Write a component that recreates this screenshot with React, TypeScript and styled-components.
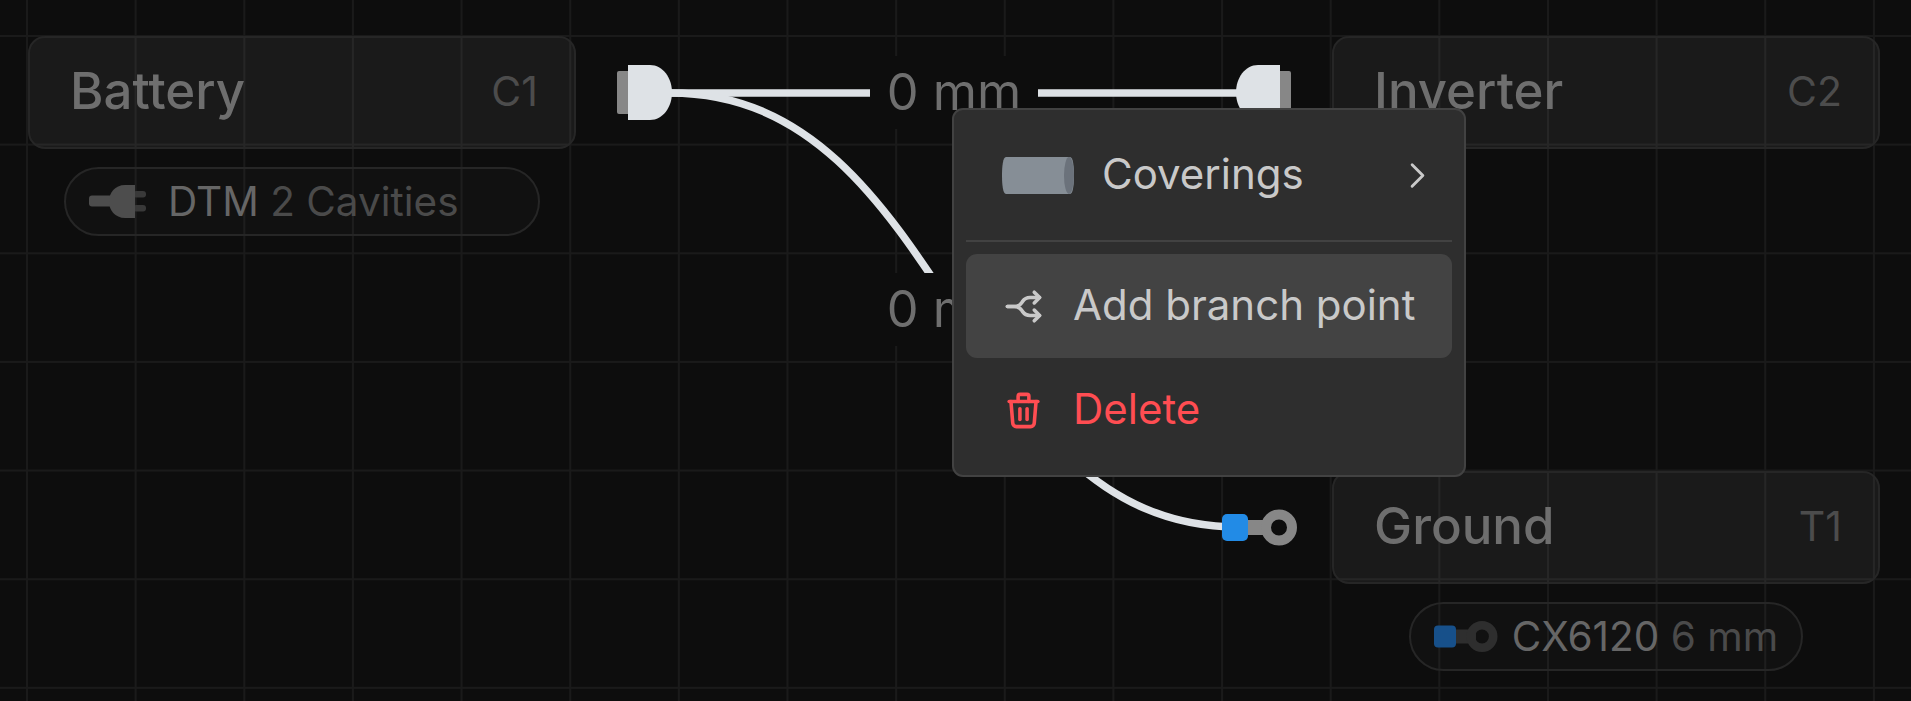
import styled, { createGlobalStyle } from "styled-components";
import { TbArrowsSplit2, TbChevronRight, TbTrash } from "react-icons/tb";

const GlobalStyle = createGlobalStyle`
  html, body {
    margin: 0;
    padding: 0;
    background: #0d0d0d;
    font-family: "Inter", "Liberation Sans", sans-serif;
  }
`;

const Canvas = styled.div`
  position: relative;
  width: 1911px;
  height: 701px;
  overflow: hidden;
  background-color: #0d0d0d;
  background-image:
    linear-gradient(to right, #1a1a1a 2px, transparent 2px),
    linear-gradient(to bottom, #1a1a1a 2px, transparent 2px);
  background-size: 108.65px 108.65px;
  background-position: 26px 35px;
`;

const Wires = styled.svg`
  position: absolute;
  inset: 0;
`;

const NodeGroup = styled.div<{ $x: number; $y: number }>`
  position: absolute;
  left: ${(p) => p.$x}px;
  top: ${(p) => p.$y}px;
  width: 548px;
  display: flex;
  flex-direction: column;
  align-items: center;
  gap: 18px;
`;

const NodeCard = styled.div`
  box-sizing: border-box;
  width: 100%;
  height: 113px;
  display: flex;
  align-items: center;
  justify-content: space-between;
  padding: 0 36px 4px 40px;
  background: rgba(255, 255, 255, 0.055);
  border: 2px solid #262626;
  border-radius: 17px;
`;

const NodeName = styled.span`
  font-size: 51px;
  font-weight: 500;
  color: #6e6e6e;
`;

const NodeRef = styled.span`
  font-size: 41px;
  color: #4c4c4c;
`;

const Pill = styled.div<{ $width?: number; $gap: number }>`
  box-sizing: border-box;
  height: 69px;
  width: ${(p) => (p.$width ? `${p.$width}px` : "auto")};
  display: flex;
  align-items: center;
  gap: ${(p) => p.$gap}px;
  padding: 0 23px;
  background: rgba(255, 255, 255, 0.018);
  border: 2px solid #262626;
  border-radius: 35px;
  font-size: 40.5px;
  white-space: nowrap;
`;

const PartName = styled.span`
  color: #666666;
`;

const PartDetail = styled.span`
  color: #4a4a4a;
`;

const WireLabel = styled.div<{ $y: number }>`
  position: absolute;
  left: 870px;
  top: ${(p) => p.$y}px;
  box-sizing: border-box;
  width: 168px;
  height: 73px;
  padding-bottom: 2px;
  display: flex;
  align-items: center;
  justify-content: center;
  background: #0d0d0d;
  font-size: 50.5px;
  color: #6e6e6e;
`;

const Menu = styled.div`
  position: absolute;
  left: 952px;
  top: 108px;
  box-sizing: border-box;
  width: 514px;
  height: 369px;
  padding: 13px 12px;
  background: #2e2e2e;
  border: 2px solid #424242;
  border-radius: 11px;
`;

const MenuItem = styled.div<{ $active?: boolean; $danger?: boolean }>`
  height: 104px;
  display: flex;
  align-items: center;
  gap: 28.5px;
  padding: 0 13.5px 0 35.5px;
  border-radius: 11px;
  background: ${(p) => (p.$active ? "#434343" : "transparent")};
  color: ${(p) => (p.$danger ? "#ff4d52" : "#c9c9c9")};
  font-size: 42px;
`;

const MenuLabel = styled.span`
  flex: 1;
  padding-bottom: 3px;
`;

const MenuDivider = styled.div`
  height: 2px;
  margin: 13px 0 12px;
  background: #424242;
`;

const CoveringIcon = styled.svg`
  flex: none;
`;

const PlugIcon = () => (
  <svg width="57" height="33" viewBox="0 0 57 33">
    <rect x="0" y="10.5" width="26" height="11" rx="3" fill="#4d4d4d" />
    <rect x="44" y="6" width="13" height="6.5" rx="3" fill="#393939" />
    <rect x="44" y="20" width="13" height="6.5" rx="3" fill="#393939" />
    <path d="M46 0H36C26 0 20 8 20 16.5C20 25 26 33 36 33H46Z" fill="#4d4d4d" />
  </svg>
);

const RingIcon = () => (
  <svg width="64" height="31" viewBox="0 0 64 31">
    <rect x="18" y="8.5" width="24" height="14" fill="#2e2e2e" />
    <circle cx="48" cy="15.5" r="11.2" fill="none" stroke="#2e2e2e" strokeWidth="8.6" />
    <rect x="0" y="4.5" width="22" height="22" rx="4" fill="#17508a" />
  </svg>
);

export default function App() {
  return (
    <Canvas>
      <GlobalStyle />
      <Wires width="1911" height="701" viewBox="0 0 1911 701">
        <g fill="none" stroke="#dee2e6" strokeWidth="7.5">
          <path d="M670 93H1238" />
          <path d="M670 93C950 93 958 527 1238 527" />
        </g>
        {/* left connector */}
        <rect x="617" y="71" width="13" height="43" rx="2" fill="#878787" />
        <path d="M628 65H650C663 65 672 78 672 92.5C672 107 663 120 650 120H628Z" fill="#dee2e6" />
        {/* right connector */}
        <rect x="1278" y="71" width="13" height="43" rx="2" fill="#878787" />
        <path d="M1280 65H1258C1245 65 1236 78 1236 92.5C1236 107 1245 120 1258 120H1280Z" fill="#dee2e6" />
        {/* ring terminal */}
        <rect x="1245" y="520" width="24" height="15" fill="#878787" />
        <circle cx="1279" cy="527.5" r="13" fill="#0d0d0d" stroke="#878787" strokeWidth="10" />
        <rect x="1222" y="514" width="26" height="27" rx="5" fill="#228be6" />
      </Wires>

      <NodeGroup $x={28} $y={36}>
        <NodeCard>
          <NodeName>Battery</NodeName>
          <NodeRef>C1</NodeRef>
        </NodeCard>
        <Pill $width={476} $gap={22}>
          <PlugIcon />
          <span>
            <PartName>DTM</PartName> <PartDetail>2 Cavities</PartDetail>
          </span>
        </Pill>
      </NodeGroup>

      <NodeGroup $x={1332} $y={36}>
        <NodeCard>
          <NodeName>Inverter</NodeName>
          <NodeRef>C2</NodeRef>
        </NodeCard>
      </NodeGroup>

      <NodeGroup $x={1332} $y={471}>
        <NodeCard>
          <NodeName>Ground</NodeName>
          <NodeRef>T1</NodeRef>
        </NodeCard>
        <Pill $gap={14}>
          <RingIcon />
          <span>
            <PartName>CX6120</PartName> <PartDetail>6 mm</PartDetail>
          </span>
        </Pill>
      </NodeGroup>

      <WireLabel $y={56}>0 mm</WireLabel>
      <WireLabel $y={273}>0 mm</WireLabel>

      <Menu>
        <MenuItem>
          <CoveringIcon width="72" height="37" viewBox="0 0 72 37">
            <path d="M4 0H68C71 0 72 9 72 18.5C72 28 71 37 68 37H4C1 37 0 28 0 18.5C0 9 1 0 4 0Z" fill="#868e96" />
            <ellipse cx="67" cy="18.5" rx="5" ry="18.5" fill="#6b727b" />
          </CoveringIcon>
          <MenuLabel>Coverings</MenuLabel>
          <TbChevronRight size={43} strokeWidth={1.6} />
        </MenuItem>
        <MenuDivider />
        <MenuItem $active>
          <TbArrowsSplit2 size={43} />
          <MenuLabel>Add branch point</MenuLabel>
        </MenuItem>
        <MenuItem $danger>
          <TbTrash size={43} />
          <MenuLabel>Delete</MenuLabel>
        </MenuItem>
      </Menu>
    </Canvas>
  );
}
